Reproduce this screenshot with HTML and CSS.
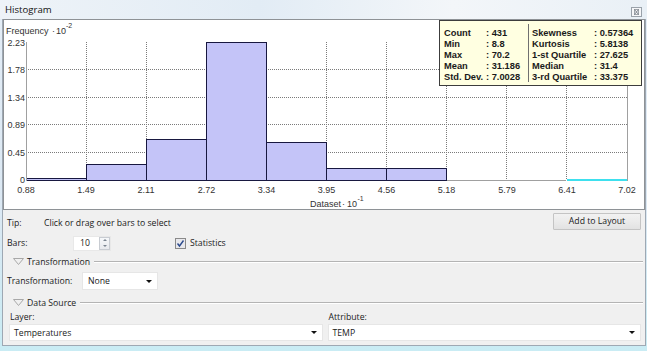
FILE: index.html
```html
<!DOCTYPE html>
<html lang="en">
<head>
    <meta charset="UTF-8">
    <title>Histogram</title>
    <link rel="stylesheet" href="styles.css">
</head>
<body>
    <div class="window">
        <div class="titlebar">
            <span class="title">Histogram</span>
            <span class="close-btn">
                <svg width="11" height="10" viewBox="0 0 11 10">
                    <rect x="0.5" y="0.5" width="10" height="9" fill="#f6f7f9" stroke="#9aa2aa"/>
                    <rect x="3.5" y="2.5" width="4" height="5" fill="none" stroke="#a0a6ac"/>
                    <path d="M3.5 2.5 L7.5 7.5 M7.5 2.5 L3.5 7.5" stroke="#6a7078" stroke-width="0.8"/>
                </svg>
            </span>
        </div>

        <div class="frame">
            <div class="chart">
                <svg class="plot" width="640" height="189" viewBox="0 0 640 189">
                    <!-- grid -->
                    <g stroke="#7a7a7a" stroke-dasharray="1 1" stroke-width="1">
                        <line x1="22" y1="49.5" x2="623" y2="49.5"/>
                        <line x1="22" y1="77.5" x2="623" y2="77.5"/>
                        <line x1="22" y1="104.5" x2="623" y2="104.5"/>
                        <line x1="22" y1="132.5" x2="623" y2="132.5"/>
                        <line x1="82.5" y1="22" x2="82.5" y2="160"/>
                        <line x1="142.5" y1="22" x2="142.5" y2="160"/>
                        <line x1="202.5" y1="22" x2="202.5" y2="160"/>
                        <line x1="262.5" y1="22" x2="262.5" y2="160"/>
                        <line x1="322.5" y1="22" x2="322.5" y2="160"/>
                        <line x1="382.5" y1="22" x2="382.5" y2="160"/>
                        <line x1="442.5" y1="22" x2="442.5" y2="160"/>
                        <line x1="502.5" y1="22" x2="502.5" y2="160"/>
                        <line x1="562.5" y1="22" x2="562.5" y2="160"/>
                    </g>

                    <!-- bars -->
                    <g fill="#c4c4f8" stroke="#181840" stroke-width="1">
                        <rect x="22.5" y="158.5" width="60" height="2"/>
                        <rect x="82.5" y="144.5" width="60" height="16"/>
                        <rect x="142.5" y="119.5" width="60" height="41"/>
                        <rect x="202.5" y="22.5" width="60" height="138"/>
                        <rect x="262.5" y="122.5" width="60" height="38"/>
                        <rect x="322.5" y="148.5" width="60" height="12"/>
                        <rect x="382.5" y="148.5" width="60" height="12"/>
                    </g>
                    <line x1="563" y1="160" x2="623" y2="160" stroke="#3ee0ee" stroke-width="2"/>

                    <!-- axes -->
                    <g stroke="#a0a0a0" stroke-width="1">
                        <line x1="22.5" y1="22" x2="22.5" y2="161"/>
                        <line x1="623.5" y1="22" x2="623.5" y2="161"/>
                        <line x1="443" y1="160.5" x2="562" y2="160.5"/>
                    </g>

                    <!-- labels -->
                    <g class="axis-text" text-anchor="end">
                        <text x="21" y="26">2.23</text>
                        <text x="21" y="53">1.78</text>
                        <text x="21" y="81">1.34</text>
                        <text x="21" y="108">0.89</text>
                        <text x="21" y="136">0.45</text>
                        <text x="21" y="163">0</text>
                    </g>
                    <g class="axis-text" text-anchor="middle">
                        <text x="22" y="173">0.88</text>
                        <text x="82" y="173">1.49</text>
                        <text x="142" y="173">2.11</text>
                        <text x="202.5" y="173">2.72</text>
                        <text x="262.5" y="173">3.34</text>
                        <text x="322.5" y="173">3.95</text>
                        <text x="382.5" y="173">4.56</text>
                        <text x="442.5" y="173">5.18</text>
                        <text x="503" y="173">5.79</text>
                        <text x="563" y="173">6.41</text>
                        <text x="623" y="173">7.02</text>
                    </g>
                    <text class="axis-text" y="14"><tspan x="2">Frequency</tspan><tspan x="48">·</tspan><tspan x="52">10</tspan><tspan class="sup" x="62" y="8">-2</tspan></text>
                    <text class="axis-text" y="187"><tspan x="306">Dataset</tspan><tspan x="338">·</tspan><tspan x="343">10</tspan><tspan class="sup" x="353.5" y="181">-1</tspan></text>
                </svg>

                <div class="stats">
                    <div class="stats-col stats-left">
                        <span class="k">Count</span><span class="v">: 431</span>
                        <span class="k">Min</span><span class="v">: 8.8</span>
                        <span class="k">Max</span><span class="v">: 70.2</span>
                        <span class="k">Mean</span><span class="v">: 31.186</span>
                        <span class="k">Std. Dev.</span><span class="v">: 7.0028</span>
                    </div>
                    <div class="stats-col stats-right">
                        <span class="k">Skewness</span><span class="v">: 0.57364</span>
                        <span class="k">Kurtosis</span><span class="v">: 5.8138</span>
                        <span class="k">1-st Quartile</span><span class="v">: 27.625</span>
                        <span class="k">Median</span><span class="v">: 31.4</span>
                        <span class="k">3-rd Quartile</span><span class="v">: 33.375</span>
                    </div>
                </div>
            </div>

            <div class="controls">
                <div class="row row-tip">
                    <span class="lbl lbl-tip">Tip:</span>
                    <span class="tip-text">Click or drag over bars to select</span>
                    <button class="btn">Add to Layout</button>
                </div>

                <div class="row row-bars">
                    <span class="lbl lbl-bars">Bars:</span>
                    <div class="spin">
                        <span class="spin-val">10</span>
                        <span class="spin-btns">
                            <span class="spin-up"></span>
                            <span class="spin-down"></span>
                        </span>
                    </div>
                    <span class="check">
                        <svg width="11" height="11" viewBox="0 0 11 11">
                            <rect x="0.5" y="0.5" width="10" height="10" fill="#e8e8ec" stroke="#8a8a8a"/>
                            <path d="M2.5 5.5 L4.5 8 L8.5 2.5" fill="none" stroke="#2c4a8c" stroke-width="1.4"/>
                        </svg>
                        Statistics
                    </span>
                </div>

                <div class="group-head">
                    <svg class="tri" width="11" height="7" viewBox="0 0 11 7">
                        <path d="M0.5 0.5 L10.5 0.5 L5.5 6.5 Z" fill="none" stroke="#a8a8a8"/>
                    </svg>
                    <span class="group-title">Transformation</span>
                    <span class="group-line"></span>
                </div>

                <div class="row row-trans">
                    <span class="lbl lbl-trans">Transformation:</span>
                    <div class="combo combo-sm">
                        <span>None</span>
                        <span class="arrow"></span>
                    </div>
                </div>

                <div class="group-head group-source">
                    <svg class="tri" width="11" height="7" viewBox="0 0 11 7">
                        <path d="M0.5 0.5 L10.5 0.5 L5.5 6.5 Z" fill="none" stroke="#a8a8a8"/>
                    </svg>
                    <span class="group-title">Data Source</span>
                    <span class="group-line"></span>
                </div>

                <div class="source-grid">
                    <div class="field">
                        <span class="field-lbl">Layer:</span>
                        <div class="combo">
                            <span>Temperatures</span>
                            <span class="arrow"></span>
                        </div>
                    </div>
                    <div class="field">
                        <span class="field-lbl">Attribute:</span>
                        <div class="combo">
                            <span>TEMP</span>
                            <span class="arrow"></span>
                        </div>
                    </div>
                </div>
            </div>
        </div>
    </div>
</body>
</html>
```

FILE: styles.css
```css
* {
    margin: 0;
    padding: 0;
    box-sizing: border-box;
}
body {
    width: 647px;
    height: 351px;
    overflow: hidden;
    background: linear-gradient(180deg, #e4edf6 0%, #dbe8f3 60%, #c9ecf4 100%);
    font-family: "Open Sans", "Liberation Sans", sans-serif;
    font-size: 8.7px;
    color: #1a1a1a;
}
.window {
    width: 647px;
    height: 351px;
}
.titlebar {
    height: 19px;
    display: flex;
    align-items: center;
    justify-content: space-between;
    padding: 0 5px 0 5px;
    background: linear-gradient(90deg, #eef3f8 0%, #e2ecf5 40%, #f3f6f9 70%, #e9f0f6 100%);
}
.title {
    font-size: 9.6px;
    color: #111;
    margin-top: -1px;
}
.close-btn {
    display: flex;
    margin-top: 4px;
}
.frame {
    margin-left: 2px;
    width: 644px;
    height: 327px;
    border: 1px solid #9ea8b3;
    border-top: none;
    background-color: #f0f0f0;
}
.chart {
    position: relative;
    height: 191px;
    background-color: #fff;
    border: 1px solid #8e9296;
}
.plot {
    display: block;
}
.axis-text {
    font-family: "Liberation Sans", Arial, sans-serif;
    font-size: 9px;
    fill: #333;
}
.sup {
    font-size: 7px;
}
.stats {
    position: absolute;
    top: 0;
    right: 2px;
    width: 203px;
    height: 66px;
    display: flex;
    background-color: #ffffe1;
    border: 1px solid #3c3c3c;
    font-family: "Liberation Sans", Arial, sans-serif;
    font-size: 9.3px;
    font-weight: bold;
    color: #1a1a1a;
}
.stats-col {
    display: grid;
    grid-auto-rows: 11px;
    align-items: center;
    padding-top: 6px;
    white-space: nowrap;
}
.stats-left {
    grid-template-columns: 42px 1fr;
    width: 89px;
    padding-left: 4px;
    border-right: 1px solid #707070;
    margin: 3px 0;
    padding-top: 3px;
}
.stats-right {
    grid-template-columns: 62px 1fr;
    padding-left: 3px;
}
.controls {
    padding: 2px 4px 0 4px;
}
.row {
    display: flex;
    align-items: center;
}
.row-tip {
    height: 21px;
}
.lbl-tip {
    width: 37px;
}
.tip-text {
    flex-grow: 1;
}
.btn {
    width: 88px;
    height: 17px;
    margin-top: -3px;
    font-family: inherit;
    font-size: 8.7px;
    color: #1a1a1a;
    border: 1px solid #c4c4c4;
    border-radius: 1px;
    background: linear-gradient(180deg, #f2f2f2 0%, #ebebeb 50%, #e2e2e2 100%);
}
.row-bars {
    height: 16px;
    margin-top: 2px;
}
.lbl-bars {
    width: 66px;
}
.spin {
    display: flex;
    align-items: center;
    width: 38px;
    height: 15px;
    background-color: #fff;
    border: 1px solid #e8e8e8;
    padding-left: 6px;
}
.spin-val {
    flex-grow: 1;
}
.spin-btns {
    display: flex;
    flex-direction: column;
    justify-content: space-around;
    align-items: center;
    width: 11px;
    height: 13px;
    border: 1px solid #c8ccd2;
    background: linear-gradient(180deg, #f6f8fa, #e8eaee);
}
.spin-up,
.spin-down {
    width: 0;
    height: 0;
    border-left: 2px solid transparent;
    border-right: 2px solid transparent;
}
.spin-up {
    border-bottom: 2px solid #7a8490;
}
.spin-down {
    border-top: 2px solid #7a8490;
}
.check {
    display: flex;
    align-items: center;
    gap: 4px;
    margin-left: 64px;
}
.group-head {
    display: flex;
    align-items: center;
    height: 15px;
    margin-top: 3px;
    padding-left: 6px;
}
.group-source {
    margin-top: 4px;
}
.tri {
    margin-right: 3px;
}
.group-title {
    color: #222;
}
.group-line {
    flex-grow: 1;
    height: 2px;
    margin-left: 4px;
    margin-right: -2px;
    border-top: 1px solid #b4b4b4;
    border-bottom: 1px solid #fff;
}
.row-trans {
    height: 20px;
    margin-top: 2px;
}
.lbl-trans {
    width: 75px;
}
.combo {
    display: flex;
    align-items: center;
    justify-content: space-between;
    height: 17px;
    padding: 0 5px 0 4px;
    background-color: #fff;
    border: 1px solid #e6e6e6;
}
.combo-sm {
    width: 76px;
    height: 18px;
    padding-left: 5px;
}
.arrow {
    width: 0;
    height: 0;
    border-left: 3px solid transparent;
    border-right: 3px solid transparent;
    border-top: 3px solid #111;
}
.source-grid {
    display: grid;
    grid-template-columns: 1fr 1fr;
    gap: 5px;
    margin-top: 1px;
    padding-left: 2px;
}
.field {
    display: flex;
    flex-direction: column;
}
.field-lbl {
    height: 13px;
    line-height: 13px;
    padding-left: 1px;
}
```
